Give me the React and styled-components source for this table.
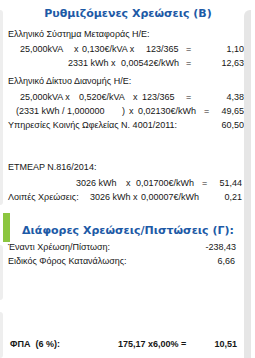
import React from 'react'
import styled, { createGlobalStyle } from 'styled-components'

const GlobalStyle = createGlobalStyle`
  html, body {
    margin: 0;
    padding: 0;
    background: #ffffff;
  }
  body {
    font-family: "Liberation Sans", Arial, sans-serif;
    color: #161616;
  }
`

const Page = styled.div`
  width: 255px;
  height: 358px;
  overflow: hidden;
  display: flex;
  background: #fff;
`

// left edge decorations
const Gutter = styled.div`
  width: 8px;
  flex-shrink: 0;
  display: flex;
  flex-direction: column;
`

const EdgeShade = styled.div`
  width: 3px;
  height: ${p => p.h}px;
  margin-top: ${p => p.top || 0}px;
  background: #eeeeee;
  border-radius: 0 3px 3px 0;
`

const GreenTab = styled.div`
  width: 7px;
  height: ${p => p.h}px;
  margin-top: ${p => p.top || 0}px;
  margin-left: 3px;
  background: #8cc63f;
  position: relative;
  z-index: 1;
`

const Content = styled.div`
  width: 236px;
  flex-shrink: 0;
  display: flex;
  flex-direction: column;
  font-size: 9px;
`

const RightStrip = styled.div`
  width: 7px;
  margin-top: 10px;
  background: #e6e6e6;
  border-radius: 6px 0 0 0;
  flex-shrink: 0;
`

const Title = styled.h2`
  margin: ${p => p.top}px 0 0;
  padding-left: 4px;
  height: ${p => p.h}px;
  line-height: ${p => p.h}px;
  text-align: center;
  font-family: "DejaVu Sans", Verdana, sans-serif;
  font-weight: bold;
  font-size: 11px;
  color: #1d5aa6;
  white-space: nowrap;
`

const Row = styled.div`
  display: flex;
  height: 14px;
  line-height: 14px;
  margin-top: ${p => p.top || 0}px;
  padding-right: ${p => p.right || 0}px;
  font-weight: ${p => (p.bold ? 'bold' : 'normal')};
  white-space: pre;
`

const Cell = styled.span`
  flex: 0 0 ${p => p.w}px;
`

const Value = styled.span`
  flex: 1;
  text-align: right;
`

// cells: [startX relative to content, text]
const Line = ({ top, right, bold, cells, value }) => {
  const parts = cells.map((c, i) => {
    const next = i < cells.length - 1 ? cells[i + 1][0] : c[0] + 1
    return <Cell key={i} w={i < cells.length - 1 ? next - c[0] : 'auto'}>{c[1]}</Cell>
  })
  return (
    <Row top={top} right={right} bold={bold}>
      <Cell w={cells[0][0]} />
      {parts}
      <Value>{value}</Value>
    </Row>
  )
}

const App = () => {
  return (
    <Page>
      <GlobalStyle />
      <Gutter>
        <EdgeShade top={10} h={195} />
        <GreenTab top={8} h={29} />
        <EdgeShade top={3} h={55} />
        <EdgeShade top={12} h={46} />
      </Gutter>
      <Content>
        <Title top={4} h={20}>Ρυθμιζόμενες Χρεώσεις (Β)</Title>
        <Line top={3} cells={[[0, 'Ελληνικό Σύστημα Μεταφοράς Η/Ε:']]} />
        <Line top={1} cells={[[12, '25,000kVA'], [66, 'x'], [74, '0,130€/kVA x'], [138, '123/365'], [178, '=']]} value="1,10" />
        <Line cells={[[60, '2331 kWh x'], [113, '0,00542€/kWh'], [178, '=']]} value="12,63" />
        <Line top={4} cells={[[0, 'Ελληνικό Δίκτυο Διανομής Η/Ε:']]} />
        <Line top={2} cells={[[12, '25,000kVA x'], [71, '0,520€/kVA'], [125, 'x'], [134, '123/365'], [178, '=']]} value="4,38" />
        <Line cells={[[8, '(2331 kWh / 1,000000'], [114, ')'], [121, 'x'], [130, '0,02130€/kWh'], [196, '=']]} value="49,65" />
        <Line cells={[[0, 'Υπηρεσίες Κοινής Ωφελείας Ν. 4001/2011:']]} value="60,50" />
        <Line top={28} cells={[[0, 'ETMEAP N.816/2014:']]} />
        <Line top={2} right={2} cells={[[68, '3026 kWh'], [118, 'x'], [128, '0,01700€/kWh'], [194, '=']]} value="51,44" />
        <Line right={2} cells={[[0, 'Λοιπές Χρεώσεις:'], [82, '3026 kWh x'], [133, '0,00007€/kWh']]} value="0,21" />
        <Title top={18} h={18}>Διάφορες Χρεώσεις/Πιστώσεις (Γ):</Title>
        <Line right={8} cells={[[0, 'Έναντι Χρέωση/Πίστωση:']]} value="-238,43" />
        <Line right={9} cells={[[0, 'Ειδικός Φόρος Κατανάλωσης:']]} value="6,66" />
        <Line top={69} right={7} bold cells={[[2, 'ΦΠΑ  (6 %):'], [110, '175,17 x6,00% =']]} value="10,51" />
      </Content>
      <RightStrip />
    </Page>
  )
}

export default App
